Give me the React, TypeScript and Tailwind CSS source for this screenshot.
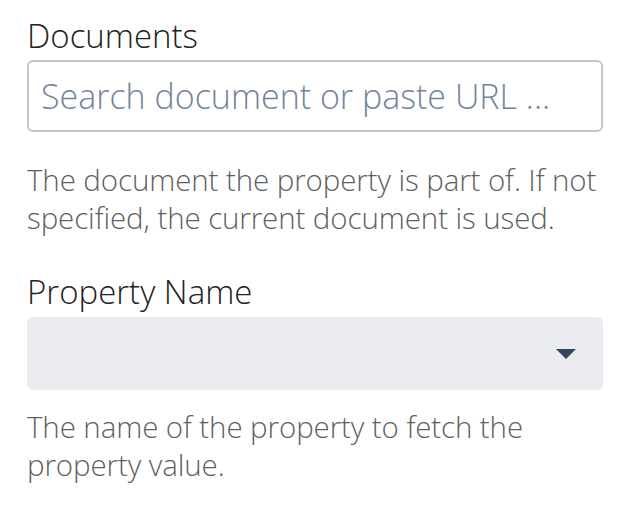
export default function App() {
    return (
        <div className="flex w-[626px] flex-col px-[27px] pt-[15px] font-['Open_Sans',sans-serif] font-light">
            <label className="text-[33px] leading-[42px] text-[#222222]">Documents</label>
            <div className="mt-[3px] flex h-[72px] w-[576px] items-center rounded-[6px] border-2 border-[#c1c7d0] px-[12px]">
                <input
                    placeholder="Search document or paste URL ..."
                    className="w-full bg-transparent text-[34px] font-light text-[#74849c] outline-none placeholder:text-[#74849c]"
                />
            </div>
            <p className="mt-[29px] text-[29.5px] leading-[38px] tracking-[-0.1px] text-[#5f5f5f]">
                The document the property is part of. If not specified, the current document is used.
            </p>
            <label className="mt-[34px] text-[33px] leading-[42px] text-[#222222]">Property Name</label>
            <div className="mt-[4px] flex h-[73px] w-[576px] items-center justify-end rounded-[6px] bg-[#ebecf0] pr-[27px]">
                <svg width="20" height="10" viewBox="0 0 20 10">
                    <path d="M0 0h20L10 10z" fill="#344563" />
                </svg>
            </div>
            <p className="mt-[18px] text-[29.5px] leading-[38px] tracking-[-0.1px] text-[#5f5f5f]">
                The name of the property to fetch the property value.
            </p>
        </div>
    );
}
